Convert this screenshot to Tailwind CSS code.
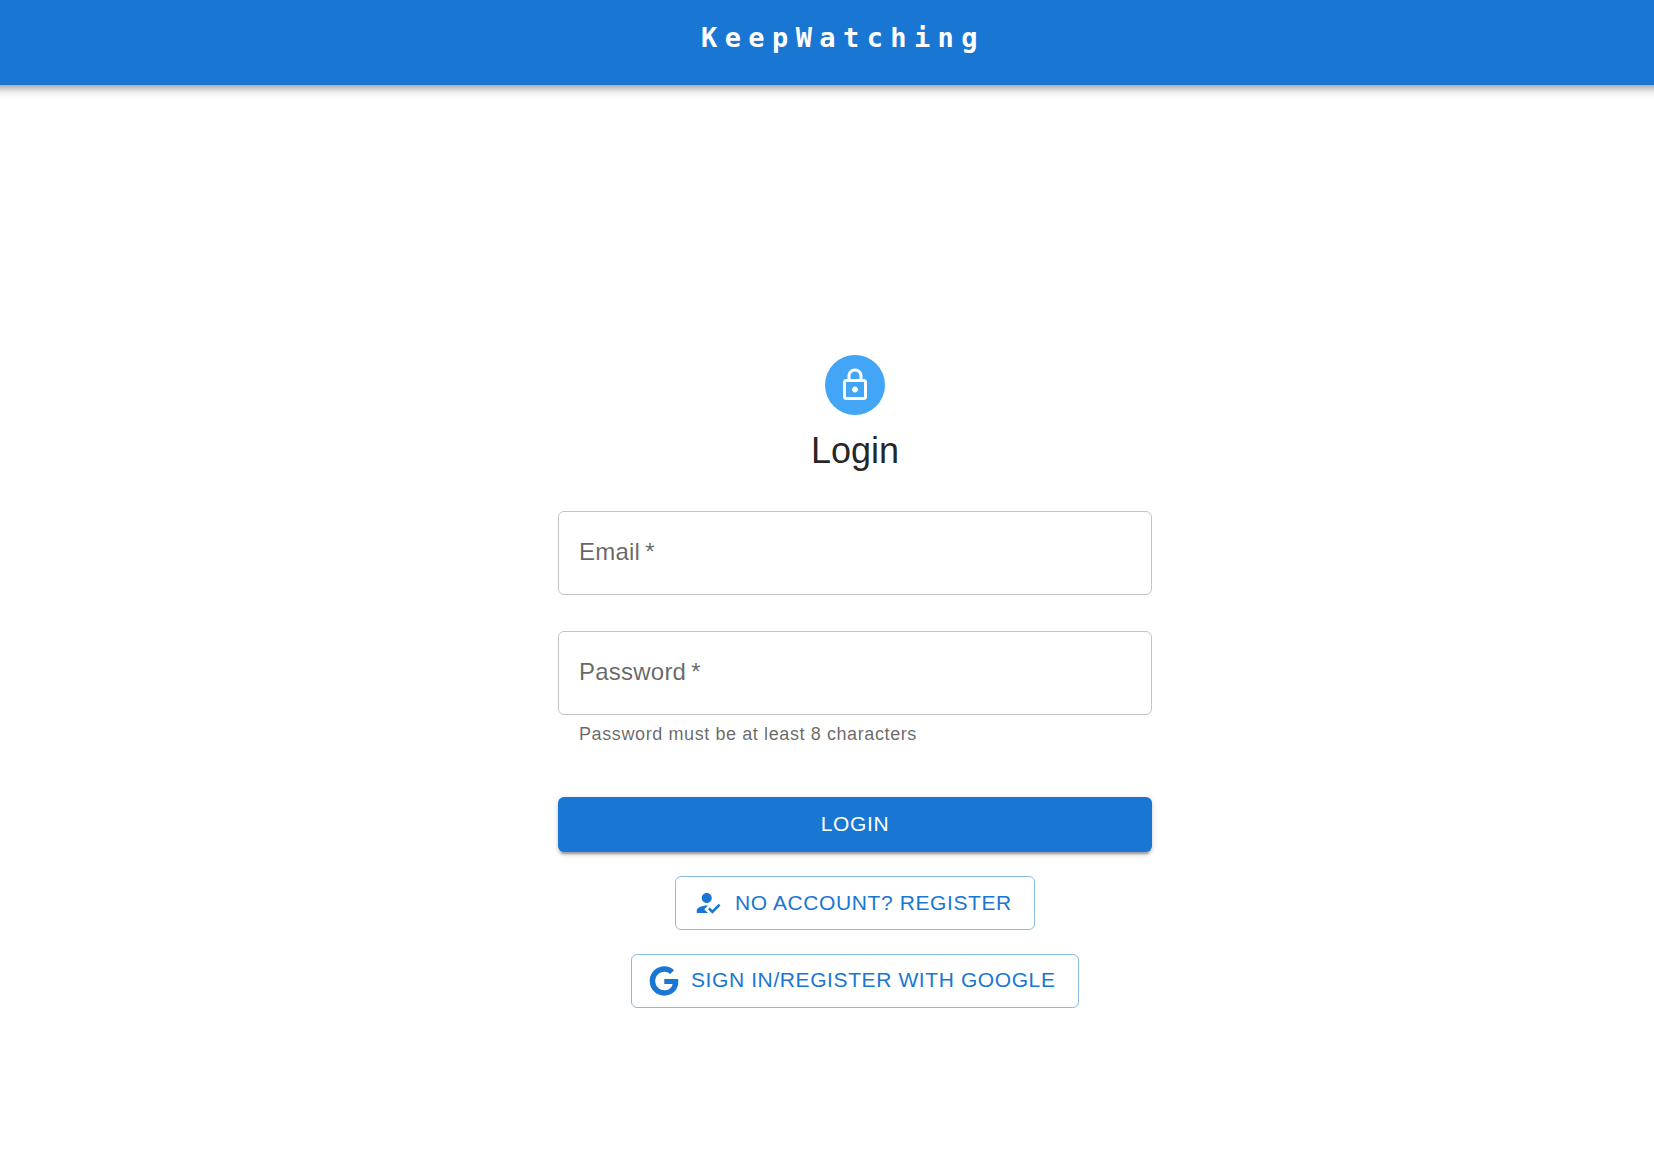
<!DOCTYPE html>
<html lang="en">
<head>
<meta charset="utf-8">
<title>KeepWatching</title>
<script src="https://cdn.jsdelivr.net/npm/@tailwindcss/browser@4"></script>
</head>
<body class="min-h-screen overflow-hidden bg-white font-['Liberation_Sans',Arial,sans-serif] text-black/87">
<header class="-mx-6 flex h-[85px] justify-center bg-[#1976d2] pt-[14px] pl-[32px] shadow-[0_3px_6px_-1.5px_rgba(0,0,0,0.2),0_6px_7.5px_0_rgba(0,0,0,0.14),0_1.5px_15px_0_rgba(0,0,0,0.12)]">
  <div class="h-12 font-['DejaVu_Sans_Mono',monospace] text-[27px] leading-[48px] font-bold tracking-[7.4px] text-white">KeepWatching</div>
</header>
<main class="ml-[558px] flex w-[594px] flex-col items-center pt-[270px]">
  <div class="flex size-[60px] items-center justify-center rounded-full bg-[#42a5f5]">
    <svg class="size-9 fill-white" viewBox="0 0 24 24"><path d="M18 8h-1V6c0-2.76-2.24-5-5-5S7 3.24 7 6v2H6c-1.1 0-2 .9-2 2v10c0 1.1.9 2 2 2h12c1.1 0 2-.9 2-2V10c0-1.1-.9-2-2-2M9 6c0-1.66 1.34-3 3-3s3 1.34 3 3v2H9zm9 14H6V10h12zm-6-3c1.1 0 2-.9 2-2s-.9-2-2-2-2 .9-2 2 .9 2 2 2"/></svg>
  </div>
  <h1 class="mt-3 text-[36px] leading-12">Login</h1>
  <div class="mt-9 flex h-[84px] w-full items-center rounded-md border border-black/23 px-5 pb-0.5 text-2xl leading-9 tracking-[0.225px] text-black/60">Email&thinsp;*</div>
  <div class="mt-9 flex h-[84px] w-full items-center rounded-md border border-black/23 px-5 pb-0.5 text-2xl leading-9 tracking-[0.225px] text-black/60">Password&thinsp;*</div>
  <p class="mt-[4px] w-full px-[21px] text-lg leading-[30px] tracking-[0.6px] text-black/60">Password must be at least 8 characters</p>
  <button class="mt-12 h-[55px] w-full rounded-md bg-[#1976d2] pb-px text-[21px] tracking-[0.6px] text-white shadow-[0_4.5px_1.5px_-3px_rgba(0,0,0,0.2),0_3px_3px_0_rgba(0,0,0,0.14),0_1.5px_7.5px_0_rgba(0,0,0,0.12)]">LOGIN</button>
  <button class="mt-6 flex h-[54px] w-[360px] items-center gap-3 rounded-md border border-[#1976d2]/50 pl-[17px] text-[21px] whitespace-nowrap tracking-[0.6px] text-[#1976d2]">
    <svg class="size-[30px] shrink-0 fill-current" viewBox="0 0 24 24"><path d="M9 17l3-2.94c-.39-.04-.68-.06-1-.06-2.67 0-8 1.34-8 4v2h9l-3-3zm2-5c2.21 0 4-1.79 4-4s-1.79-4-4-4-4 1.79-4 4 1.79 4 4 4"/><path d="M15.47 20.5L12 17l1.4-1.41 2.07 2.08 5.13-5.17 1.4 1.41z"/></svg>
    <span>NO ACCOUNT? REGISTER</span>
  </button>
  <button class="mt-6 flex h-[54px] w-[448px] items-center gap-3 rounded-md border border-[#1976d2]/50 pl-[17px] text-[21px] whitespace-nowrap tracking-[0.6px] text-[#1976d2]">
    <svg class="size-[30px] shrink-0 fill-current" viewBox="-0.3 -0.3 24.6 24.6"><path d="M12.24 10.285V14.4h6.806c-.275 1.765-2.056 5.174-6.806 5.174-4.095 0-7.439-3.389-7.439-7.574s3.345-7.574 7.439-7.574c2.33 0 3.891.989 4.785 1.849l3.254-3.138C18.189 1.186 15.479 0 12.24 0c-6.635 0-12 5.365-12 12s5.365 12 12 12c6.926 0 11.52-4.869 11.52-11.726 0-.788-.085-1.39-.189-1.989H12.24z"/></svg>
    <span class="pb-0.5">SIGN IN/REGISTER WITH GOOGLE</span>
  </button>
</main>
</body>
</html>
